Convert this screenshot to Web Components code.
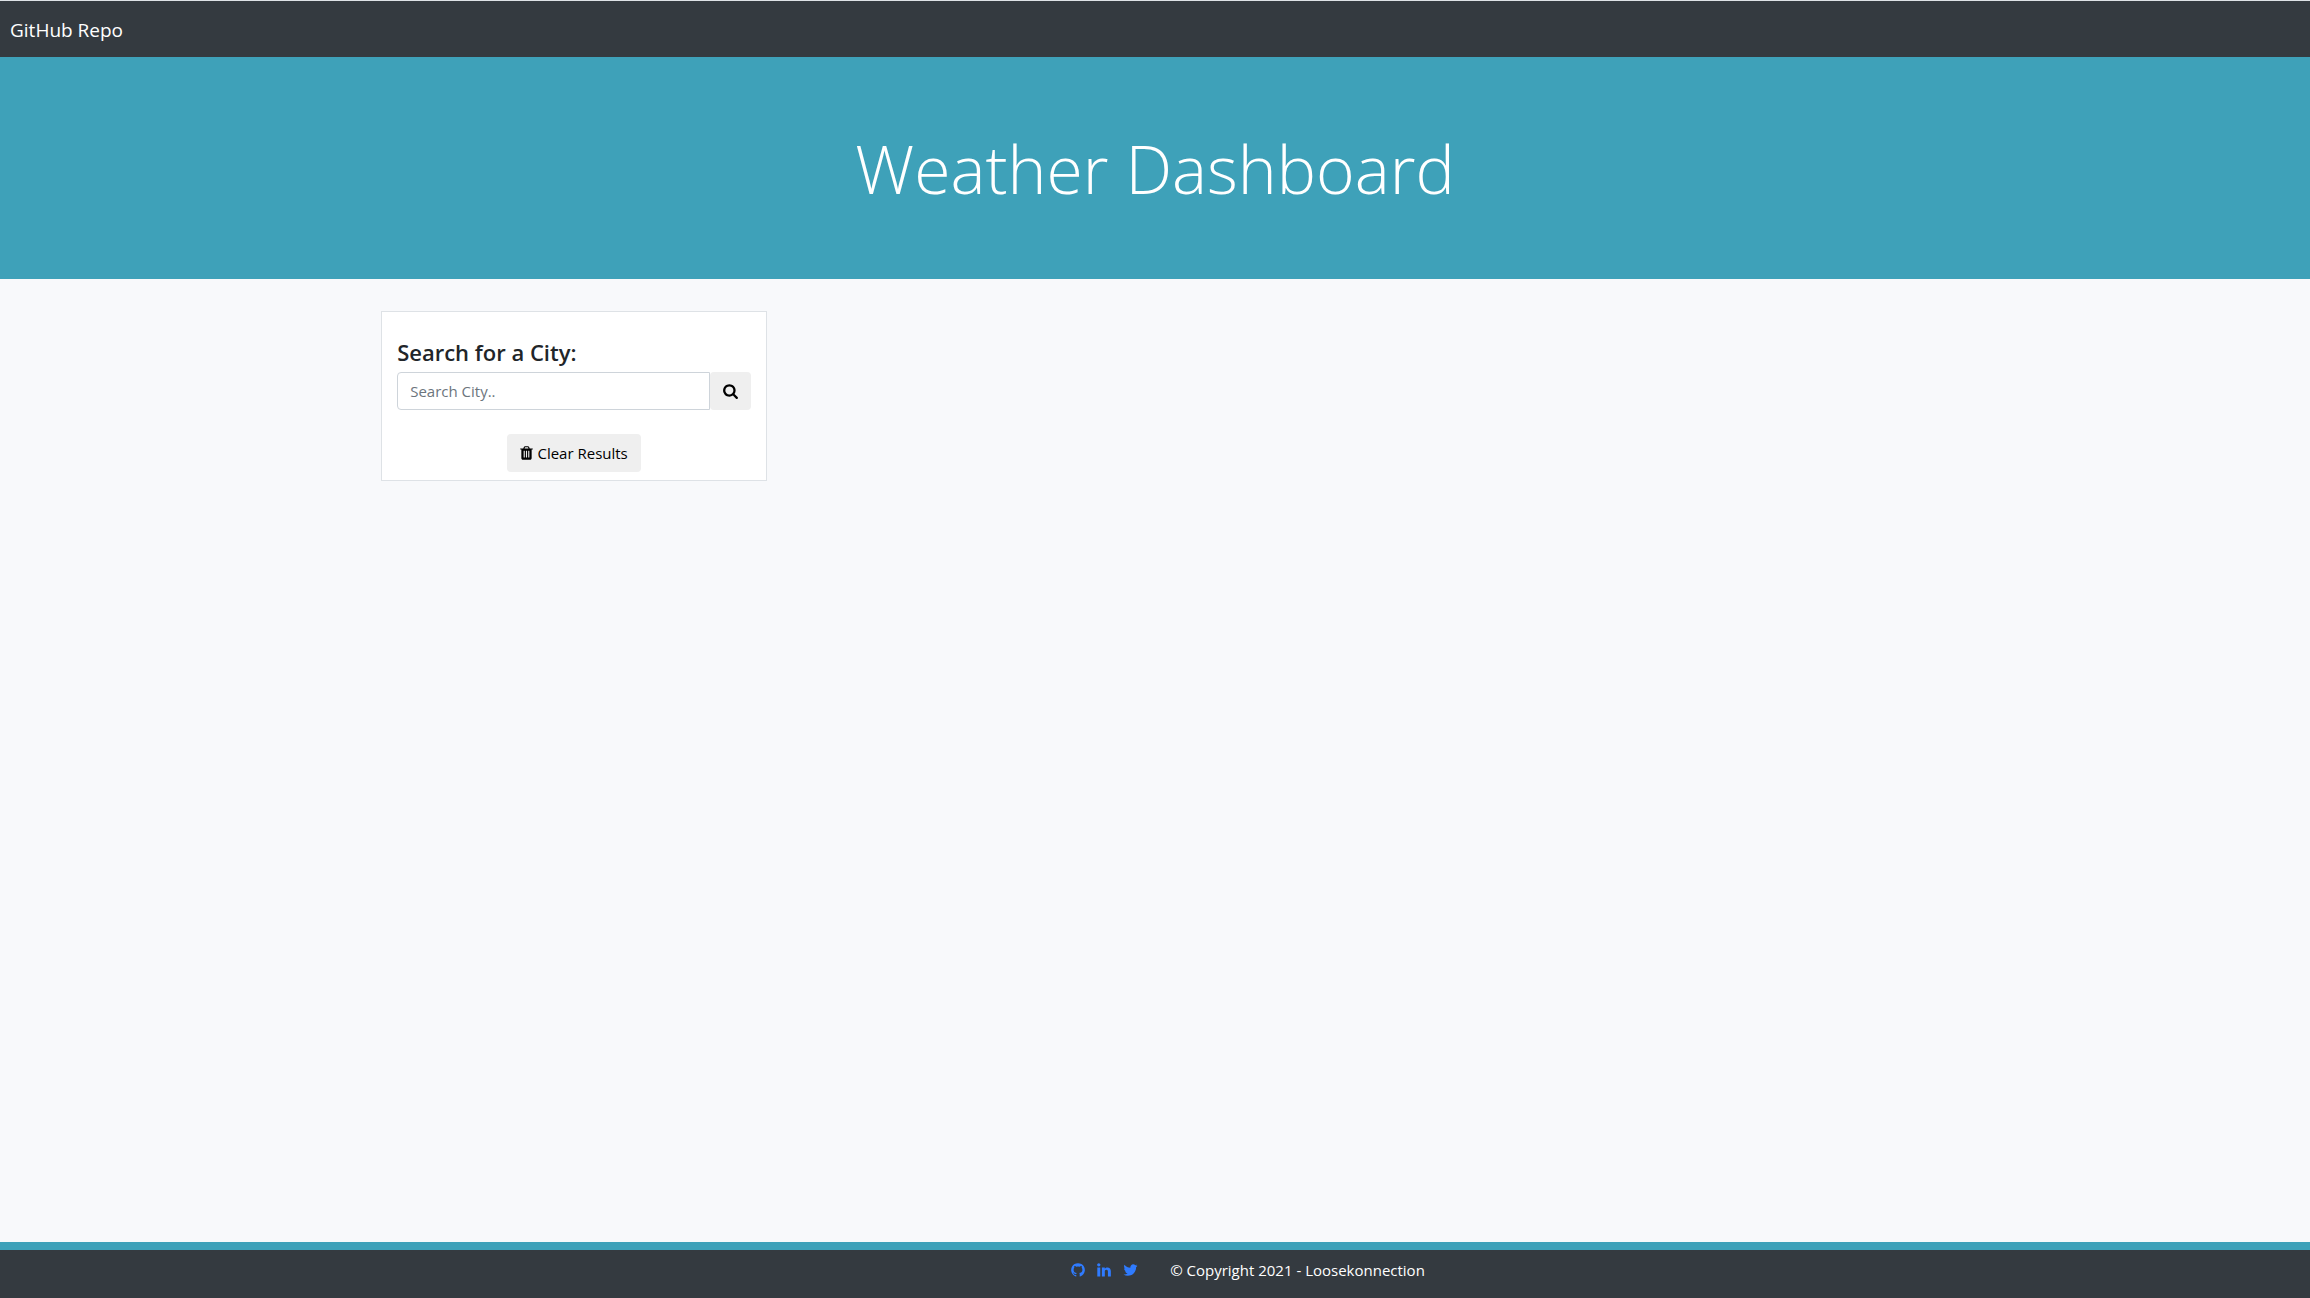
<!DOCTYPE html>
<html lang="en">
<head>
<meta charset="utf-8">
<title>Weather Dashboard</title>
<style>
  html, body { margin: 0; height: 100%; }
  body {
    font-family: "Open Sans", "Noto Sans", sans-serif;
    font-size: 15px;
    line-height: 24px;
    color: #212529;
    background: #f8f9fb;
  }
</style>
</head>
<body>
<weather-app></weather-app>

<script>
const ICONS = {
  search: ['64 0 1664 1792', 15, 'M1216 832q0-185-131.5-316.5t-316.5-131.5-316.5 131.5-131.5 316.5 131.5 316.5 316.5 131.5 316.5-131.5 131.5-316.5zm512 832q0 52-38 90t-90 38q-54 0-90-38l-343-342q-179 124-399 124-143 0-273.5-55.5t-225-150-150-225-55.5-273.5 55.5-273.5 150-225 225-150 273.5-55.5 273.5 55.5 225 150 150 225 55.5 273.5q0 220-124 399l343 343q37 37 37 90z'],
  trash: ['192 0 1408 1792', 13, 'M704 1376v-704q0-14-9-23t-23-9h-64q-14 0-23 9t-9 23v704q0 14 9 23t23 9h64q14 0 23-9t9-23zm256 0v-704q0-14-9-23t-23-9h-64q-14 0-23 9t-9 23v704q0 14 9 23t23 9h64q14 0 23-9t9-23zm256 0v-704q0-14-9-23t-23-9h-64q-14 0-23 9t-9 23v704q0 14 9 23t23 9h64q14 0 23-9t9-23zm-544-992h448l-48-117q-7-9-17-11h-317q-10 2-17 11zm928 32v64q0 14-9 23t-23 9h-96v948q0 83-47 143.5t-113 60.5h-832q-66 0-113-58.5t-47-141.5v-952h-96q-14 0-23-9t-9-23v-64q0-14 9-23t23-9h309l70-167q15-37 54-63t79-26h320q40 0 79 26t54 63l70 167h309q14 0 23 9t9 23z'],
  github: ['128 0 1536 1792', 14, 'M896 128q209 0 385.5 103t279.5 279.5 103 385.5q0 251-146.5 451.5t-378.5 277.5q-27 5-40-7t-13-30q0-3 .5-76.5t.5-134.5q0-97-52-142 57-6 102.5-18t94-39 81-66.5 53-105 20.5-150.5q0-119-79-206 37-91-8-204-28-9-81 11t-92 44l-38 24q-93-26-192-26t-192 26q-16-11-42.5-27t-83.5-38.5-85-13.5q-45 113-8 204-79 87-79 206 0 85 20.5 150t52.5 105 80.5 67 94 39 102.5 18q-39 36-49 103-21 10-45 15t-57 5-65.5-21.5-55.5-62.5q-19-32-48.5-52t-49.5-24l-20-3q-21 0-29 4.5t-5 11.5 9 14 13 12l7 5q22 10 43.5 38t31.5 51l10 23q13 38 44 61.5t67 30 69.5 7 55.5-3.5l23-4q0 38 .5 88.5t.5 54.5q0 18-13 30t-40 7q-232-77-378.5-277.5t-146.5-451.5q0-209 103-385.5t279.5-279.5 385.5-103z'],
  linkedin: ['128 0 1536 1792', 14, 'M477 625v991h-330v-991h330zm21-306q1 73-50.5 122t-135.5 49h-2q-82 0-132-49t-50-122q0-74 51.5-122.5t134.5-48.5 133 48.5 51 122.5zm1166 729v568h-329v-530q0-105-40.5-164.5t-126.5-59.5q-63 0-105.5 34.5t-63.5 85.5q-11 30-11 81v553h-329q2-399 2-647t-1-296l-1-48h329v144h-2q20-32 41-56t56.5-52 87-43.5 114.5-15.5q171 0 275 113.5t104 332.5z'],
  twitter: ['64 0 1664 1792', 15, 'M1684 408q-67 98-162 167 1 14 1 42 0 130-38 259.5t-115.5 248.5-184.5 210.5-258 146-323 54.5q-271 0-496-145 35 4 78 4 225 0 401-138-105-2-188-64.5t-114-159.5q33 5 61 5 43 0 85-11-112-23-185.5-111.5t-73.5-205.5v-4q68 38 146 41-66-44-105-115t-39-154q0-88 44-163 121 149 294.5 238.5t371.5 99.5q-8-38-8-74 0-134 94.5-228.5t228.5-94.5q140 0 236 102 109-21 205-78-37 115-142 178 93-10 186-50z']
};

function define(name, html) {
  customElements.define(name, class extends HTMLElement {
    constructor() {
      super();
      this.attachShadow({ mode: 'open' }).innerHTML = html;
    }
  });
}

customElements.define('app-icon', class extends HTMLElement {
  connectedCallback() {
    const [box, width, path] = ICONS[this.getAttribute('name')];
    if (!this.shadowRoot) this.attachShadow({ mode: 'open' });
    this.shadowRoot.innerHTML = `
      <style>:host { display: block; flex: none; } svg { display: block; fill: currentColor; }</style>
      <svg viewBox="${box}" width="${width}" height="16" aria-hidden="true"><path d="${path}"/></svg>`;
  }
});

define('nav-bar', `
  <style>
    :host { display: flex; align-items: center; height: 54px; padding: 2px 10px 0; background: #343a40; border-top: 1px solid #dee2e6; }
    a { color: #fff; font-size: 19px; line-height: 30px; text-decoration: none; }
  </style>
  <a href="#"><slot></slot></a>`);

define('page-banner', `
  <style>
    :host { display: block; padding: 68px 32px; background: #3ea1b9; text-align: center; }
    h1 { margin: 0; color: #fff; font-size: 66px; font-weight: 300; line-height: 86px; }
  </style>
  <h1><slot></slot></h1>`);

define('city-search', `
  <style>
    :host { display: block; box-sizing: border-box; padding: 24px 15px 8px; background: #fff; border: 1px solid #dee2e6; }
    form { display: flex; flex-direction: column; }
    label { font-size: 22px; font-weight: 600; line-height: 32px; margin-bottom: 4px; }
    .group { display: flex; }
    input {
      flex: 1; min-width: 0; height: 38px; box-sizing: border-box; padding: 0 12px;
      font: inherit; color: #495057; background: #fff;
      border: 1px solid #ced4da; border-radius: 4px 0 0 4px;
    }
    input::placeholder { color: #6c757d; opacity: 1; }
    button {
      display: flex; align-items: center; gap: 4px; height: 38px; padding: 0 13px;
      font: inherit; color: #000; background: #efefef; border: 0; border-radius: 4px;
    }
    .clear { align-self: center; margin-top: 24px; }
  </style>
  <form>
    <label for="city">Search for a City:</label>
    <div class="group">
      <input id="city" type="text" placeholder="Search City..">
      <button type="button" aria-label="Search"><app-icon name="search"></app-icon></button>
    </div>
    <button class="clear" type="button"><app-icon name="trash"></app-icon><span>Clear Results</span></button>
  </form>`);

define('page-footer', `
  <style>
    :host { display: flex; justify-content: center; align-items: flex-start; gap: 32px; height: 40px;
      padding: 8px 0 0 186px; background: #343a40; border-top: 8px solid #3ea1b9; color: #fff; }
    nav { display: flex; align-items: center; gap: 12px; height: 24px; }
    a { color: #2f7bff; }
  </style>
  <nav>
    <a href="#" aria-label="GitHub"><app-icon name="github"></app-icon></a>
    <a href="#" aria-label="LinkedIn"><app-icon name="linkedin"></app-icon></a>
    <a href="#" aria-label="Twitter"><app-icon name="twitter"></app-icon></a>
  </nav>
  <span><slot></slot></span>`);

define('weather-app', `
  <style>
    :host { display: flex; flex-direction: column; min-height: 100vh; }
    main { flex: 1; box-sizing: border-box; width: 67%; margin: 0 auto; padding-top: 32px; }
    city-search { width: calc(25% - 1px); min-width: 320px; }
  </style>
  <nav-bar>GitHub Repo</nav-bar>
  <page-banner>Weather Dashboard</page-banner>
  <main><city-search></city-search></main>
  <page-footer>© Copyright 2021 - Loosekonnection</page-footer>`);
</script>
</body>
</html>
